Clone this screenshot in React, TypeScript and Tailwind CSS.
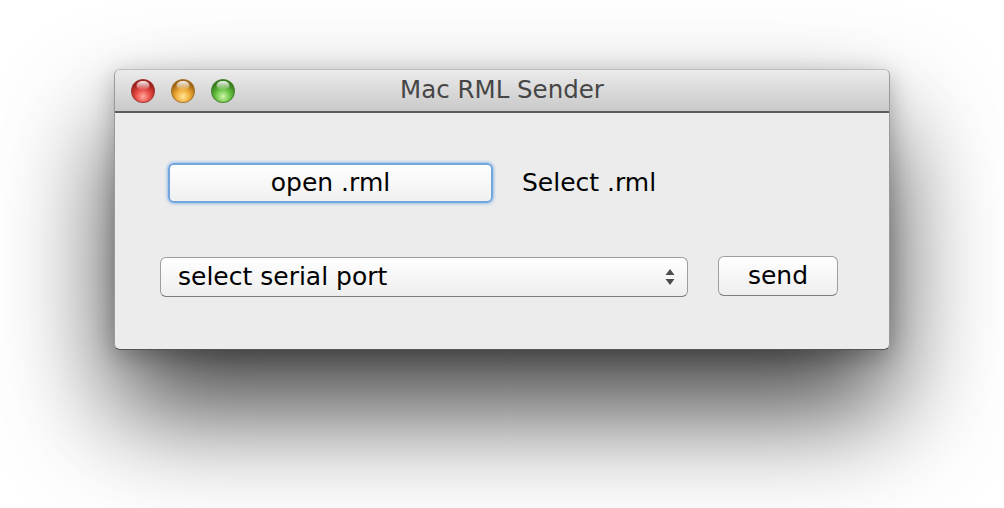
import React from "react";

const Light: React.FC<{ id: string; base: string; dark: string; light: string; ring: string }> = ({ id, base, dark, light, ring }) => (
    <svg width="26" height="26" viewBox="0 0 26 26">
        <defs>
            <radialGradient id={`${id}-g`} cx="50%" cy="75%" r="65%">
                <stop offset="0%" stopColor={light} />
                <stop offset="50%" stopColor={base} />
                <stop offset="100%" stopColor={dark} />
            </radialGradient>
            <linearGradient id={`${id}-h`} x1="0" y1="0" x2="0" y2="1">
                <stop offset="0%" stopColor="#ffffff" stopOpacity="0.95" />
                <stop offset="100%" stopColor="#ffffff" stopOpacity="0.05" />
            </linearGradient>
        </defs>
        <circle cx="13" cy="13" r="12" fill={ring} />
        <circle cx="13" cy="13" r="11" fill={`url(#${id}-g)`} />
        <ellipse cx="13" cy="7.5" rx="6.5" ry="4.5" fill={`url(#${id}-h)`} />
    </svg>
);

const App: React.FC = () => {
    return (
        <div
            className="w-[1004px] h-[508px] bg-white pl-[114px] pt-[69px] overflow-hidden"
            style={{ fontFamily: '"DejaVu Sans", "Noto Sans", sans-serif' }}
        >
            <div className="w-[776px] h-[281px] rounded-[6px] bg-[#ececec] border border-[#9a9a9a] border-t-[#bdbdbd] border-b-[#555555] shadow-[0_60px_110px_rgba(0,0,0,0.75),0_6px_24px_rgba(0,0,0,0.25)] overflow-hidden flex flex-col">
                {/* Title bar */}
                <div className="relative h-[43px] shrink-0 bg-gradient-to-b from-[#ebebeb] to-[#c9c9c9] border-b-2 border-[#5c5c5c] flex items-center">
                    <div className="flex items-center gap-[14px] pl-[15px]">
                        <Light id="r" base="#ea4a44" dark="#9a1c18" light="#ffa99e" ring="#a33a35" />
                        <Light id="y" base="#f0ab36" dark="#9a6114" light="#ffe79a" ring="#a8772e" />
                        <Light id="g" base="#6ac444" dark="#357a1a" light="#d0f6ac" ring="#4d8535" />
                    </div>
                    <div className="absolute inset-0 flex items-center justify-center text-[24.5px] text-[#464646] pointer-events-none">
                        Mac RML Sender
                    </div>
                </div>

                {/* Content */}
                <div className="flex flex-col pt-[50px] pl-[45px]">
                    <div className="flex items-center">
                        <button className="ml-[8px] w-[325px] h-[40px] rounded-[6px] bg-gradient-to-b from-white to-[#f0f0f0] border-2 border-[#74a6de] shadow-[0_0_3px_1px_rgba(120,170,230,0.7)] text-[25px] text-black flex items-center justify-center">
                            open .rml
                        </button>
                        <span className="ml-[29px] text-[25px] text-black">Select .rml</span>
                    </div>
                    <div className="flex items-center mt-[54px]">
                        <div className="w-[528px] h-[40px] rounded-[6px] bg-gradient-to-b from-white to-[#eeeeee] border border-[#9e9e9e] border-b-[#7d7d7d] flex items-center justify-between pl-[17px] pr-[12px] text-[25px] text-black">
                            <span>select serial port</span>
                            <svg width="10" height="18" viewBox="0 0 10 18">
                                <path d="M5 1 L9.5 7 L0.5 7 Z" fill="#4d4d4d" />
                                <path d="M5 17 L9.5 11 L0.5 11 Z" fill="#4d4d4d" />
                            </svg>
                        </div>
                        <button className="ml-[30px] -mt-[2px] w-[120px] h-[40px] rounded-[6px] bg-gradient-to-b from-white to-[#eeeeee] border border-[#9e9e9e] border-b-[#7d7d7d] text-[25px] text-black flex items-center justify-center">
                            send
                        </button>
                    </div>
                </div>
            </div>
        </div>
    );
};

export default App;
